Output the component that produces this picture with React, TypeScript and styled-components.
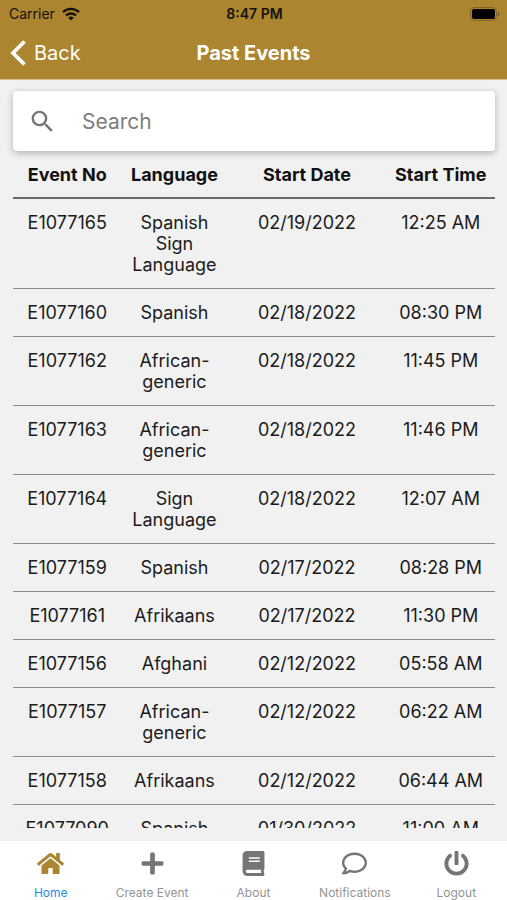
import React from "react";
import styled, { createGlobalStyle } from "styled-components";
import { FaBook, FaHome, FaPlus, FaPowerOff, FaRegComment } from "react-icons/fa";
import { MdSearch } from "react-icons/md";

const GlobalStyle = createGlobalStyle`
  * { box-sizing: border-box; }
  body {
    margin: 0;
    background: #f1f1f1;
    color: #1b1b1b;
    font-family: Inter, "Liberation Sans", sans-serif;
  }
`;

const Screen = styled.div`
  display: flex;
  flex-direction: column;
  height: 100vh;
`;

const Header = styled.header`
  flex: none;
  background: #ab852f;
  border-bottom: 1px solid #d3bd8c;
`;

const StatusBar = styled.div`
  display: grid;
  grid-template-columns: 1fr auto 1fr;
  align-items: center;
  height: 27px;
  padding: 0 7px 0 9px;
  color: #16110a;
  font-size: 14px;
`;

const Carrier = styled.span`
  display: flex;
  align-items: center;
  gap: 7px;
`;

const Clock = styled.time`
  font-weight: 600;
`;

const BatteryIcon = styled.svg`
  justify-self: end;
`;

const NavBar = styled.nav`
  display: grid;
  grid-template-columns: 1fr auto 1fr;
  align-items: center;
  height: 52px;
  padding: 0 10px;
  color: #fff;
`;

const BackButton = styled.button`
  display: flex;
  align-items: center;
  justify-self: start;
  gap: 8px;
  padding: 0;
  border: 0;
  background: none;
  color: inherit;
  font: inherit;
  font-size: 20px;
  cursor: pointer;
`;

const Title = styled.h1`
  margin: 0;
  font-size: 20px;
  font-weight: 700;
`;

const Main = styled.main`
  display: flex;
  flex: 1;
  flex-direction: column;
  min-height: 0;
  padding: 11px 12px 13px 13px;
`;

const SearchBox = styled.label`
  display: flex;
  flex: none;
  align-items: center;
  gap: 25px;
  height: 60px;
  padding: 0 15px;
  border-radius: 4px;
  background: #fff;
  box-shadow: 0 2px 7px rgba(0, 0, 0, 0.28);
  color: #757575;
`;

const SearchInput = styled.input`
  flex: 1;
  min-width: 0;
  padding: 0;
  border: 0;
  outline: 0;
  background: none;
  color: #222;
  font: inherit;
  font-size: 21px;

  &::placeholder {
    color: #7d7d7d;
    opacity: 1;
  }
`;

const TableArea = styled.div`
  flex: 1;
  min-height: 0;
  overflow-y: auto;
  scrollbar-width: none;
`;

const EventTable = styled.table`
  width: 100%;
  border-collapse: separate;
  border-spacing: 0;
  table-layout: fixed;
  text-align: center;
`;

const Column = styled.col<{ $share: number }>`
  width: ${({ $share }) => $share}%;
`;

const HeadCell = styled.th`
  padding: 13px 0 12px;
  border-bottom: 2px solid #696969;
  color: #111;
  font-size: 18px;
  font-weight: 700;
  line-height: 21px;
  white-space: nowrap;
`;

const Cell = styled.td`
  padding: 13px 10px;
  border-bottom: 1px solid #8b8b8b;
  font-size: 18px;
  line-height: 21px;
  vertical-align: top;
`;

const ValueCell = styled(Cell)`
  padding-right: 0;
  padding-left: 0;
  white-space: nowrap;
`;

const TabBar = styled.nav`
  display: grid;
  flex: none;
  grid-template-columns: repeat(5, 1fr);
  height: 59px;
  background: #fff;
`;

const Tab = styled.a<{ $active?: boolean }>`
  display: flex;
  flex-direction: column;
  align-items: center;
  gap: 8px;
  padding-top: 9px;
  color: ${({ $active }) => ($active ? "#238be6" : "#949494")};
  font-size: 12px;
  line-height: 15px;
  text-decoration: none;
  white-space: nowrap;
`;

const TabIcon = styled.span<{ $active?: boolean }>`
  display: flex;
  align-items: center;
  height: 27px;
  color: ${({ $active }) => ($active ? "#ab852f" : "#757575")};
`;

const events = [
  ["E1077165", "Spanish Sign Language", "02/19/2022", "12:25 AM"],
  ["E1077160", "Spanish", "02/18/2022", "08:30 PM"],
  ["E1077162", "African-generic", "02/18/2022", "11:45 PM"],
  ["E1077163", "African-generic", "02/18/2022", "11:46 PM"],
  ["E1077164", "Sign Language", "02/18/2022", "12:07 AM"],
  ["E1077159", "Spanish", "02/17/2022", "08:28 PM"],
  ["E1077161", "Afrikaans", "02/17/2022", "11:30 PM"],
  ["E1077156", "Afghani", "02/12/2022", "05:58 AM"],
  ["E1077157", "African-generic", "02/12/2022", "06:22 AM"],
  ["E1077158", "Afrikaans", "02/12/2022", "06:44 AM"],
  ["E1077090", "Spanish", "01/30/2022", "11:00 AM"],
];

const tabs = [
  { label: "Home", icon: <FaHome size={27} />, active: true },
  { label: "Create Event", icon: <FaPlus size={25} /> },
  { label: "About", icon: <FaBook size={25} /> },
  { label: "Notifications", icon: <FaRegComment size={25} /> },
  { label: "Logout", icon: <FaPowerOff size={25} /> },
];

const Wifi = () => (
  <svg width="18" height="14" viewBox="0 0 18 14" fill="none" stroke="currentColor" strokeWidth="2.4" aria-hidden="true">
    <path d="M1 5.2a11.4 11.4 0 0 1 16 0" />
    <path d="M4 8.5a7.2 7.2 0 0 1 10 0" />
    <path d="M9 13.6 6.2 10.8a4 4 0 0 1 5.6 0z" fill="currentColor" stroke="none" />
  </svg>
);

const Battery = () => (
  <BatteryIcon width="30" height="14" viewBox="0 0 30 14" aria-hidden="true">
    <rect x="0.5" y="0.5" width="26" height="13" rx="4" fill="none" stroke="#806426" />
    <rect x="2" y="2" width="23" height="10" rx="2" fill="#000" />
    <path d="M28 5v4c1-.3 1.6-1 1.6-2S29 5.300 28 5z" fill="#705a27" />
  </BatteryIcon>
);

const Chevron = () => (
  <svg width="16" height="26" viewBox="0 0 16 26" fill="none" stroke="currentColor" strokeWidth="3.8" aria-hidden="true">
    <path d="M14.500 1.500 3 13l11.500 11.500" />
  </svg>
);

export default function App() {
  return (
    <Screen>
      <GlobalStyle />
      <Header>
        <StatusBar>
          <Carrier>
            Carrier <Wifi />
          </Carrier>
          <Clock>8:47 PM</Clock>
          <Battery />
        </StatusBar>
        <NavBar>
          <BackButton type="button">
            <Chevron />
            Back
          </BackButton>
          <Title>Past Events</Title>
        </NavBar>
      </Header>
      <Main>
        <SearchBox>
          <MdSearch size={29} aria-hidden="true" />
          <SearchInput type="text" placeholder="Search" aria-label="Search" />
        </SearchBox>
        <TableArea>
          <EventTable>
            <colgroup>
              <Column $share={22.5} />
              <Column $share={22} />
              <Column $share={33} />
              <Column $share={22.5} />
            </colgroup>
            <thead>
              <tr>
                <HeadCell scope="col">Event No</HeadCell>
                <HeadCell scope="col">Language</HeadCell>
                <HeadCell scope="col">Start Date</HeadCell>
                <HeadCell scope="col">Start Time</HeadCell>
              </tr>
            </thead>
            <tbody>
              {events.map(([id, language, date, time]) => (
                <tr key={id}>
                  <ValueCell>{id}</ValueCell>
                  <Cell>{language}</Cell>
                  <ValueCell>{date}</ValueCell>
                  <ValueCell>{time}</ValueCell>
                </tr>
              ))}
            </tbody>
          </EventTable>
        </TableArea>
      </Main>
      <TabBar aria-label="Primary">
        {tabs.map(({ label, icon, active }) => (
          <Tab key={label} href="#" $active={active} aria-current={active ? "page" : undefined}>
            <TabIcon $active={active}>{icon}</TabIcon>
            {label}
          </Tab>
        ))}
      </TabBar>
    </Screen>
  );
}
